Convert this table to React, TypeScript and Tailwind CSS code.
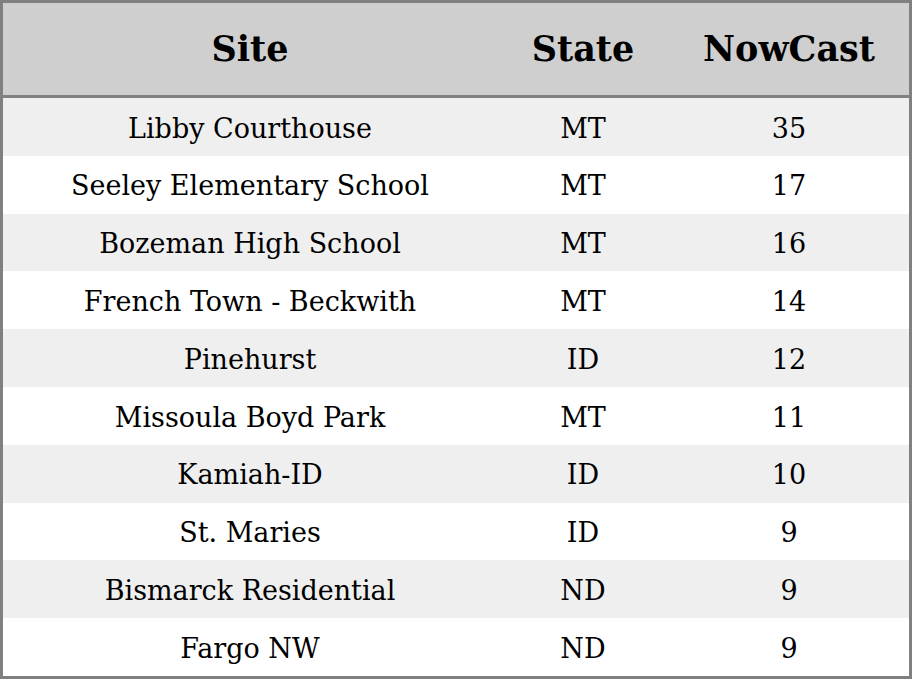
import React from 'react';

interface Reading {
  site: string;
  state: string;
  nowcast: number;
}

const readings: Reading[] = [
  { site: 'Libby Courthouse', state: 'MT', nowcast: 35 },
  { site: 'Seeley Elementary School', state: 'MT', nowcast: 17 },
  { site: 'Bozeman High School', state: 'MT', nowcast: 16 },
  { site: 'French Town - Beckwith', state: 'MT', nowcast: 14 },
  { site: 'Pinehurst', state: 'ID', nowcast: 12 },
  { site: 'Missoula Boyd Park', state: 'MT', nowcast: 11 },
  { site: 'Kamiah-ID', state: 'ID', nowcast: 10 },
  { site: 'St. Maries', state: 'ID', nowcast: 9 },
  { site: 'Bismarck Residential', state: 'ND', nowcast: 9 },
  { site: 'Fargo NW', state: 'ND', nowcast: 9 },
];

const App: React.FC = () => {
  return (
    <div
      className="w-[912px] h-[679px] flex flex-col border-[3px] border-[#808080] bg-white text-black"
      style={{ fontFamily: '"DejaVu Serif", serif' }}
    >
      {/* Header */}
      <div className="h-[95px] shrink-0 flex items-center bg-[#cfcfcf] border-b-[3px] border-[#808080] text-[35px] font-bold">
        <div className="w-[494px] text-center">Site</div>
        <div className="w-[172px] text-center">State</div>
        <div className="flex-1 text-center">NowCast</div>
      </div>

      <div className="flex-1 flex flex-col">
        {readings.map((r, i) => (
          <div
            key={r.site}
            className={`flex-1 flex items-center pt-1 text-[27px] ${i % 2 === 0 ? 'bg-[#efefef]' : 'bg-white'}`}
          >
            <div className="w-[494px] text-center">{r.site}</div>
            <div className="w-[172px] text-center">{r.state}</div>
            <div className="flex-1 text-center">{r.nowcast}</div>
          </div>
        ))}
      </div>
    </div>
  );
};

export default App;
